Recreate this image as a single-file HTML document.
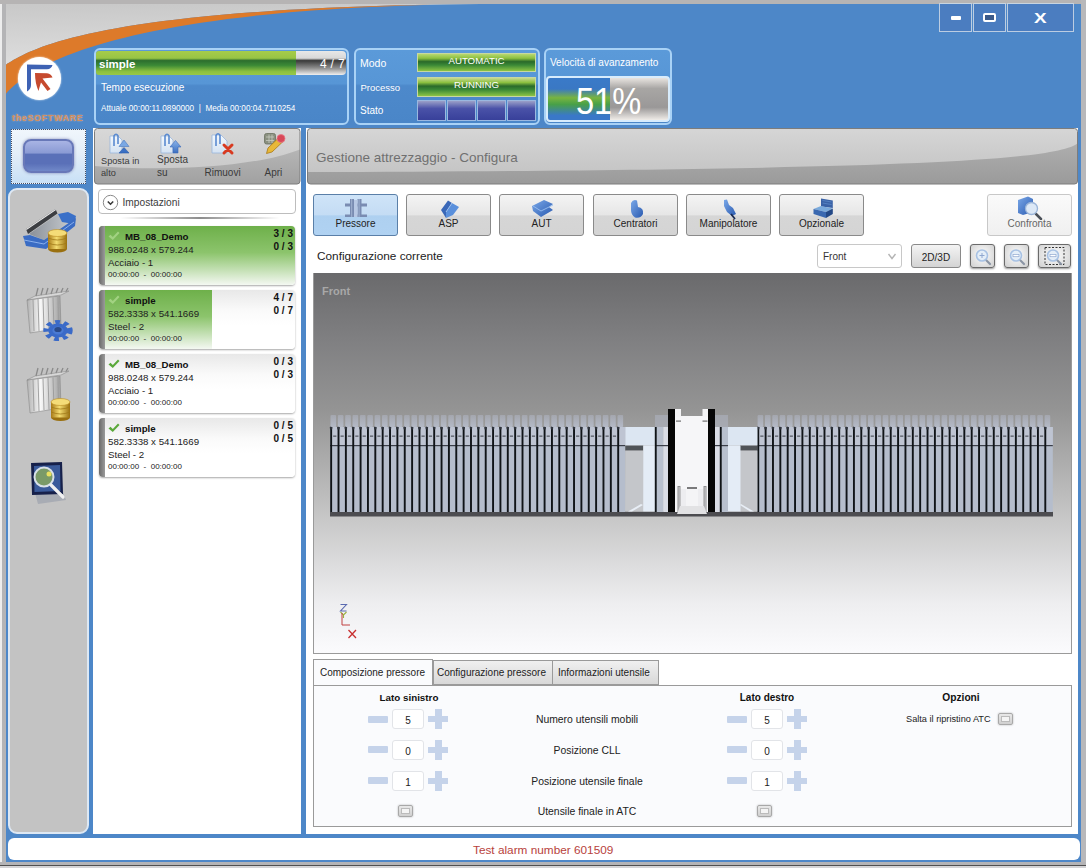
<!DOCTYPE html>
<html><head><meta charset="utf-8">
<style>
*{box-sizing:border-box}
body{margin:0;width:1086px;height:868px;overflow:hidden;position:relative;background:#b9b9bb;font-family:"Liberation Sans",sans-serif}
.a{position:absolute}
.t{position:absolute;white-space:nowrap;line-height:1}
.hp{position:absolute;border:2px solid #a9d2f6;border-radius:6px;background:linear-gradient(#5b9ad9 0%,#5796d6 46%,#4d89cb 49%,#4a86c8 100%)}
.wb{position:absolute;top:3px;height:29px;border:1.5px solid #bccde2;border-top:1px solid #c8d4e0;background:#4b7dc0}
.tb{position:absolute;top:194px;height:42px;width:85px;border:1px solid #8a8a8a;border-radius:3px;background:linear-gradient(#f4f4f4 0%,#e6e6e6 50%,#d6d6d6 52%,#d4d4d4 100%);font-size:10px;color:#222;text-align:center}
.tb span{position:absolute;left:0;right:0;top:23px}
.item{position:absolute;left:99px;width:196px;height:59px;border-radius:4px;background:linear-gradient(#e8e8e8,#fafafa 35%,#fff 60%);box-shadow:0 1px 2px rgba(0,0,0,.35);overflow:hidden}
.item .strip{position:absolute;left:0;top:0;bottom:0;width:6px;background:linear-gradient(90deg,#6a6a6a,#9a9a9a)}
.item .g{position:absolute;left:0;top:0;bottom:0;background:linear-gradient(#6eb04a 0%,#8cc46c 45%,#f4f8f2 100%)}

.mn{position:absolute;width:20px;height:7px;background:#c5d3ea;border-radius:1px}
.pl{position:absolute;width:20px;height:20px}
.pl:before{content:"";position:absolute;left:0;top:7px;width:20px;height:6px;background:#c5d3ea}
.pl:after{content:"";position:absolute;left:6.5px;top:0;width:7px;height:20px;background:#c5d3ea}
.inp{position:absolute;width:32px;height:20px;border:1px solid #e2e4e8;border-radius:3px;background:#fff;font-size:10px;color:#222;text-align:center;line-height:22px}
.cb{position:absolute;width:15px;height:12px;border:1px solid #a8a8a8;border-radius:2px;background:linear-gradient(#e8e8e8,#d0d0d0);box-shadow:0 0 2px rgba(0,0,0,.3)}
.cb:after{content:"";position:absolute;left:2px;top:2px;right:2px;bottom:2px;background:#f4f4f4;border:1px solid #bbb}
.lbl{position:absolute;white-space:nowrap;line-height:1;font-size:10.4px;color:#222;text-align:center;width:200px}
</style></head><body>
<!-- frame -->
<div class="a" style="left:0;top:0;width:2px;height:868px;background:#ededed"></div>
<div class="a" style="left:2px;top:0;width:4px;height:868px;background:#b4b4b6"></div>
<div class="a" style="left:0;top:0;width:1086px;height:4px;background:#b6b4b4"></div>
<div class="a" style="left:1081px;top:0;width:5px;height:868px;background:#b8b8ba"></div>
<div class="a" style="left:0;top:862px;width:1086px;height:6px;background:#b4b4b6"></div>
<div class="a" style="left:0;top:865px;width:1086px;height:1px;background:#505050"></div>
<div class="a" style="left:0;top:866px;width:1086px;height:2px;background:#d4d4d6"></div>
<!-- window bg -->
<div class="a" style="left:6px;top:4px;width:1075px;height:858px;background:#4d87c8"></div>
<svg class="a" style="left:6px;top:4px" width="600" height="100" viewBox="6 4 600 100">
  <defs><linearGradient id="gg" x1="0" y1="0" x2="0.15" y2="1"><stop offset="0" stop-color="#c8c8c8"/><stop offset="1" stop-color="#dedede"/></linearGradient></defs>
  <path d="M6,4 L480,4 C92.3,7.2 28.9,50.4 6,64.7 Z" fill="url(#gg)"/>
  <path d="M6,64.7 C28.9,50.4 92.3,7.2 480,4 C158,7.1 39.9,53.9 6,93.7 Z" fill="#dd7a2a"/>
</svg>
<!-- logo -->
<div class="a" style="left:18px;top:57px;width:43px;height:43px;border-radius:50%;background:#fff;box-shadow:0 0 2px #fff"></div>
<svg class="a" style="left:18px;top:57px" width="43" height="43" viewBox="0 0 43 43">
  <path d="M9,7.5 L34.5,8 Q33.5,12 29,12.3 L13,12.3 L13,28 Q13,32 9,34.5 Z" fill="#3e62b4"/>
  <path d="M17,16 L29,16.3 Q33.5,17 34.5,20.5 L24.5,21.5 L32.5,32 L29.5,34 L23,25.5 Q21.5,30 20.5,34 Q17,26 17,16 Z" fill="#c64a2e"/>
</svg>
<div class="t" style="left:12px;top:114px;font-size:8.8px;font-weight:bold;color:#cf8d60;letter-spacing:0.75px;text-shadow:0 0 1.5px #f0c8a8">theSOFTWARE</div>

<!-- window buttons -->
<div class="wb" style="left:939px;width:33px"></div>
<div class="wb" style="left:973px;width:33px"></div>
<div class="wb" style="left:1007px;width:67px"></div>
<div class="a" style="left:951px;top:16px;width:10px;height:4px;background:#fff;border-radius:1px"></div>
<div class="a" style="left:983px;top:13px;width:13px;height:9px;border:2.5px solid #fff;border-radius:2px;background:#3b5a8a"></div>
<div class="t" style="left:1033.5px;top:11px;font-size:14px;font-weight:bold;color:#fff;transform:scaleX(1.35);transform-origin:0 0">X</div>

<!-- header panel 1 -->
<div class="hp" style="left:94px;top:48px;width:255px;height:77px"></div>
<div class="a" style="left:96px;top:51px;width:200px;height:24px;background:linear-gradient(#a6cc4a 0%,#98c444 30%,#2c6e2e 40%,#3c8a36 60%,#8cc040 85%,#98c848 100%);border-radius:3px 0 0 3px"></div>
<div class="a" style="left:296px;top:51px;width:50px;height:24px;background:linear-gradient(#e8e8e8 0%,#d8d8d8 30%,#3a3a3a 40%,#8a8a8a 70%,#f0f0f0 100%);border-radius:0 4px 4px 0"></div>
<div class="t" style="left:99px;top:59px;font-size:11.5px;font-weight:bold;color:#fff">simple</div>
<div class="t" style="left:320px;top:57.5px;font-size:12px;color:#fff;letter-spacing:0.3px">4 / 7</div>
<div class="t" style="left:101px;top:83px;font-size:10px;color:#fff">Tempo esecuzione</div>
<div class="t" style="left:101px;top:105px;font-size:8.2px;color:#fff">Attuale 00:00:11.0890000 &nbsp;|&nbsp; Media 00:00:04.7110254</div>

<!-- header panel 2 -->
<div class="hp" style="left:354px;top:48px;width:186px;height:77px"></div>
<div class="t" style="left:360px;top:57.8px;font-size:10.5px;color:#fff">Modo</div>
<div class="t" style="left:360.5px;top:82.5px;font-size:9.5px;color:#fff">Processo</div>
<div class="t" style="left:360px;top:105.8px;font-size:10px;color:#fff">Stato</div>
<div class="a" style="left:417px;top:53px;width:119px;height:19px;border:1px solid #c8d8a0;background:linear-gradient(#b8d870 0%,#8cc040 25%,#2a6a2a 45%,#3a8836 65%,#8cc444 100%)"></div>
<div class="t" style="left:417px;top:56.3px;width:119px;text-align:center;font-size:9.7px;color:#fff">AUTOMATIC</div>
<div class="a" style="left:417px;top:77px;width:119px;height:20px;border:1px solid #c8d8a0;background:linear-gradient(#c8d890 0%,#8cc040 25%,#2a6a2a 45%,#3a8836 65%,#8cc444 100%)"></div>
<div class="t" style="left:417px;top:80px;width:119px;text-align:center;font-size:9.7px;color:#fff">RUNNING</div>
<div class="a" style="left:417px;top:100px;width:29px;height:21px;border:1px solid #9ab8e0;background:linear-gradient(#9aa0c8 0%,#4a52a8 40%,#38409a 100%)"></div>
<div class="a" style="left:447px;top:100px;width:29px;height:21px;border:1px solid #9ab8e0;background:linear-gradient(#9aa0c8 0%,#4a52a8 40%,#38409a 100%)"></div>
<div class="a" style="left:477px;top:100px;width:29px;height:21px;border:1px solid #9ab8e0;background:linear-gradient(#9aa0c8 0%,#4a52a8 40%,#38409a 100%)"></div>
<div class="a" style="left:507px;top:100px;width:29px;height:21px;border:1px solid #9ab8e0;background:linear-gradient(#9aa0c8 0%,#4a52a8 40%,#38409a 100%)"></div>

<!-- header panel 3 -->
<div class="hp" style="left:544px;top:48px;width:128px;height:77px"></div>
<div class="t" style="left:550px;top:58.3px;font-size:10px;color:#fff">Velocità di avanzamento</div>
<div class="a" style="left:546px;top:76px;width:124px;height:46px;border:2px solid #d8ecfc;border-radius:4px;background:linear-gradient(#e8e4e0 0%,#a8a6a4 25%,#9a9898 70%,#f0ece8 100%);overflow:hidden">
  <div class="a" style="left:0;top:0;width:62px;height:44px;background:linear-gradient(#3a7ac8 0%,#3a78c4 25%,#78b440 45%,#48a048 60%,#3a78c8 85%,#3a78c8 100%)"></div>
</div>
<div class="t" style="left:576px;top:83.6px;font-size:36px;color:#fff;transform:scaleX(0.905);transform-origin:0 0">51%</div>

<!-- left sidebar -->
<div class="a" style="left:11px;top:129px;width:75px;height:55px;background:#fff"></div><div class="a" style="left:11px;top:129px;width:75px;height:55px;border:1px dotted #4a4e60;background:linear-gradient(#f0f6fc 0%,#e4eef8 45%,#c8e0f6 100%)"></div>
<div class="a" style="left:23px;top:139px;width:51px;height:34px;border-radius:8px;border:2px solid #6878b8;background:linear-gradient(#a8b4e4 0%,#8a9ad4 40%,#5a70b8 44%,#5a70b8 75%,#7088c8 100%);box-shadow:0 0 3px rgba(40,40,120,.5)"></div>
<div class="a" style="left:8px;top:188px;width:81px;height:646px;border-radius:9px;border:2px solid #dde8f4;background:#c3c3c3"></div>

<!-- middle panel -->
<div class="a" style="left:93px;top:128px;width:208px;height:706px;background:#fff"></div>
<svg class="a" style="left:94px;top:128px" width="207" height="57" viewBox="94 128 207 57">
  <defs>
    <linearGradient id="tg1" x1="0" y1="0" x2="0" y2="1"><stop offset="0" stop-color="#d8d8d8"/><stop offset="1" stop-color="#c4c4c4"/></linearGradient>
    <linearGradient id="tg2" x1="0" y1="0" x2="0" y2="1"><stop offset="0" stop-color="#b6b6b6"/><stop offset="1" stop-color="#a0a0a0"/></linearGradient>
    <clipPath id="tc"><rect x="94.5" y="128.5" width="205.5" height="55.5" rx="3"/></clipPath>
  </defs>
  <g clip-path="url(#tc)">
    <rect x="94" y="128" width="207" height="57" fill="url(#tg1)"/>
    <path d="M94,166 C160,171 250,169 301,149 L301,185 L94,185 Z" fill="url(#tg2)"/>
  </g>
  <rect x="94.5" y="128.5" width="205.5" height="55.5" rx="3" fill="none" stroke="#7c7c7c" stroke-width="1"/>
</svg>
<div class="t" style="left:101px;top:155px;font-size:9.2px;color:#3a3a3a;line-height:12.2px">Sposta in<br>alto</div>
<div class="t" style="left:157px;top:154px;font-size:10px;color:#3a3a3a;line-height:12.5px">Sposta<br>su</div>
<div class="t" style="left:204.5px;top:168.2px;font-size:10px;color:#3a3a3a">Rimuovi</div>
<div class="t" style="left:264.5px;top:168.2px;font-size:10px;color:#3a3a3a">Apri</div>

<div class="a" style="left:98px;top:189px;width:198px;height:25px;border:1px solid #bdbdbd;border-radius:4px;background:#fff"></div>
<svg class="a" style="left:102px;top:194px" width="17" height="17" viewBox="0 0 17 17"><circle cx="8.5" cy="8.5" r="7.2" fill="#fff" stroke="#8a8a8a" stroke-width="1"/><path d="M5.8,7.5 L8.5,10.2 L11.2,7.5" fill="none" stroke="#3a3a3a" stroke-width="1.6"/></svg>
<div class="t" style="left:122.5px;top:197.5px;font-size:10.2px;color:#3c3c3c">Impostazioni</div>
<div class="a" style="left:120px;top:217px;width:160px;height:2px;background:linear-gradient(90deg,rgba(0,0,0,0),rgba(0,0,0,.45),rgba(0,0,0,0))"></div>


<div class="item" style="top:226px"><div class="g" style="width:196px"></div><div class="strip"></div></div>
<div class="item" style="top:290px"><div class="g" style="width:113px"></div><div class="strip"></div></div>
<div class="item" style="top:354px"><div class="strip"></div></div>
<div class="item" style="top:418px"><div class="strip"></div></div>
<svg class="a" style="left:108px;top:231px" width="12" height="10" viewBox="0 0 12 10"><path d="M0.5,5.5 L2.5,3.8 L4.8,6 L10,0.5 L11.5,2 L4.8,9 Z" fill="#a2d282"/></svg>
<div class="t" style="left:125px;top:232px;font-size:9.7px;font-weight:bold;color:#111">MB_08_Demo</div>
<div class="t" style="left:108px;top:245px;font-size:9.7px;color:#222">988.0248 x 579.244</div>
<div class="t" style="left:108px;top:258px;font-size:9.7px;color:#222">Acciaio - 1</div>
<div class="t" style="left:108px;top:271px;font-size:8px;color:#222">00:00:00 &nbsp;- &nbsp;00:00:00</div>
<div class="t" style="left:243px;top:229px;width:50px;text-align:right;font-size:10px;font-weight:bold;color:#111">3 / 3</div>
<div class="t" style="left:243px;top:242px;width:50px;text-align:right;font-size:10px;font-weight:bold;color:#111">0 / 3</div>
<svg class="a" style="left:108px;top:295px" width="12" height="10" viewBox="0 0 12 10"><path d="M0.5,5.5 L2.5,3.8 L4.8,6 L10,0.5 L11.5,2 L4.8,9 Z" fill="#a2d282"/></svg>
<div class="t" style="left:125px;top:296px;font-size:9.7px;font-weight:bold;color:#111">simple</div>
<div class="t" style="left:108px;top:309px;font-size:9.7px;color:#222">582.3338 x 541.1669</div>
<div class="t" style="left:108px;top:322px;font-size:9.7px;color:#222">Steel - 2</div>
<div class="t" style="left:108px;top:335px;font-size:8px;color:#222">00:00:00 &nbsp;- &nbsp;00:00:00</div>
<div class="t" style="left:243px;top:293px;width:50px;text-align:right;font-size:10px;font-weight:bold;color:#111">4 / 7</div>
<div class="t" style="left:243px;top:306px;width:50px;text-align:right;font-size:10px;font-weight:bold;color:#111">0 / 7</div>
<svg class="a" style="left:108px;top:359px" width="12" height="10" viewBox="0 0 12 10"><path d="M0.5,5.5 L2.5,3.8 L4.8,6 L10,0.5 L11.5,2 L4.8,9 Z" fill="#5aa83a"/></svg>
<div class="t" style="left:125px;top:360px;font-size:9.7px;font-weight:bold;color:#111">MB_08_Demo</div>
<div class="t" style="left:108px;top:373px;font-size:9.7px;color:#222">988.0248 x 579.244</div>
<div class="t" style="left:108px;top:386px;font-size:9.7px;color:#222">Acciaio - 1</div>
<div class="t" style="left:108px;top:399px;font-size:8px;color:#222">00:00:00 &nbsp;- &nbsp;00:00:00</div>
<div class="t" style="left:243px;top:357px;width:50px;text-align:right;font-size:10px;font-weight:bold;color:#111">0 / 3</div>
<div class="t" style="left:243px;top:370px;width:50px;text-align:right;font-size:10px;font-weight:bold;color:#111">0 / 3</div>
<svg class="a" style="left:108px;top:423px" width="12" height="10" viewBox="0 0 12 10"><path d="M0.5,5.5 L2.5,3.8 L4.8,6 L10,0.5 L11.5,2 L4.8,9 Z" fill="#5aa83a"/></svg>
<div class="t" style="left:125px;top:424px;font-size:9.7px;font-weight:bold;color:#111">simple</div>
<div class="t" style="left:108px;top:437px;font-size:9.7px;color:#222">582.3338 x 541.1669</div>
<div class="t" style="left:108px;top:450px;font-size:9.7px;color:#222">Steel - 2</div>
<div class="t" style="left:108px;top:463px;font-size:8px;color:#222">00:00:00 &nbsp;- &nbsp;00:00:00</div>
<div class="t" style="left:243px;top:421px;width:50px;text-align:right;font-size:10px;font-weight:bold;color:#111">0 / 5</div>
<div class="t" style="left:243px;top:434px;width:50px;text-align:right;font-size:10px;font-weight:bold;color:#111">0 / 5</div>

<!-- main panel -->
<div class="a" style="left:306px;top:128px;width:772px;height:706px;background:#fff"></div>
<svg class="a" style="left:307px;top:128px" width="771" height="57" viewBox="307 128 771 57">
  <defs>
    <linearGradient id="hg1" x1="0" y1="0" x2="0" y2="1"><stop offset="0" stop-color="#d6d6d6"/><stop offset="1" stop-color="#c0c0c0"/></linearGradient>
    <linearGradient id="hg2" x1="0" y1="0" x2="0" y2="1"><stop offset="0" stop-color="#aeaeae"/><stop offset="1" stop-color="#9a9a9a"/></linearGradient>
    <clipPath id="hc"><rect x="307.5" y="128.5" width="770" height="55.5" rx="3"/></clipPath>
  </defs>
  <g clip-path="url(#hc)">
    <rect x="307" y="128" width="771" height="57" fill="url(#hg1)"/>
    <path d="M307,172 C850,170 1055,163 1078,143 L1078,185 L307,185 Z" fill="url(#hg2)"/>
  </g>
  <rect x="307.5" y="128.5" width="770" height="55.5" rx="3" fill="none" stroke="#7c7c7c" stroke-width="1"/>
</svg>
<div class="t" style="left:316px;top:151px;font-size:13.5px;color:#707070">Gestione attrezzaggio - Configura</div>


<!-- toolbar buttons -->
<div class="tb" style="left:313px;border-color:#5a7fa8;background:linear-gradient(#cfe4f8 0%,#c4dcf4 50%,#aed0f0 52%,#b0d2f2 100%)"><span>Pressore</span></div>
<div class="tb" style="left:406px"><span>ASP</span></div>
<div class="tb" style="left:499px"><span>AUT</span></div>
<div class="tb" style="left:593px"><span>Centratori</span></div>
<div class="tb" style="left:686px"><span>Manipolatore</span></div>
<div class="tb" style="left:779px"><span>Opzionale</span></div>
<div class="tb" style="left:987px;border-color:#c8c8c8;background:linear-gradient(#fafafa,#f0f0f0);color:#666"><span>Confronta</span></div>

<div class="t" style="left:317px;top:251px;font-size:11.8px;color:#222">Configurazione corrente</div>
<div class="a" style="left:817px;top:244px;width:85px;height:24px;border:1px solid #c8c8c8;border-radius:3px;background:#fff"></div>
<div class="t" style="left:823px;top:252px;font-size:10px;color:#333">Front</div>
<svg class="a" style="left:887px;top:251.5px" width="10" height="9" viewBox="0 0 10 9"><path d="M1.5,2 L5,6.5 L8.5,2" fill="none" stroke="#b4b4b4" stroke-width="1.4"/></svg>
<div class="a" style="left:911px;top:244px;width:50px;height:24px;border:1px solid #8a8a8a;border-radius:3px;background:linear-gradient(#f4f4f4 0%,#e4e4e4 50%,#d4d4d4 100%)"></div>
<div class="t" style="left:911px;top:252.5px;width:50px;text-align:center;font-size:10px;color:#222">2D/3D</div>
<div class="a" style="left:970px;top:244px;width:25px;height:24px;border:1px solid #6a6a6a;border-radius:3px;background:radial-gradient(ellipse at 50% 45%,#f0f0f0 30%,#cfcfcf 100%);box-shadow:0 1px 2px rgba(0,0,0,.4)"></div>
<div class="a" style="left:1004px;top:244px;width:25px;height:24px;border:1px solid #6a6a6a;border-radius:3px;background:radial-gradient(ellipse at 50% 45%,#f0f0f0 30%,#cfcfcf 100%);box-shadow:0 1px 2px rgba(0,0,0,.4)"></div>
<div class="a" style="left:1038px;top:244px;width:33px;height:24px;border:1px solid #6a6a6a;border-radius:3px;background:radial-gradient(ellipse at 50% 45%,#f0f0f0 30%,#cfcfcf 100%);box-shadow:0 1px 2px rgba(0,0,0,.4)"></div>

<!-- viewport -->
<div class="a" style="left:313px;top:273px;width:759px;height:381px;border:1px solid #9a9a9a;border-top:none;background:linear-gradient(#6a6a6c 0%,#808082 18%,#949494 36%,#c8c8c8 65%,#eeeef0 87%,#fbfbfd 100%)"></div>
<div class="t" style="left:322px;top:286px;font-size:11px;font-weight:bold;color:#a8a8a8">Front</div>
<svg id="scene" class="a" style="left:313px;top:273px" width="759" height="380" viewBox="313 273 759 380">
<defs><linearGradient id="spk" x1="0" y1="0" x2="0" y2="1"><stop offset="0" stop-color="#b4bacb" stop-opacity="0.45"/><stop offset="1" stop-color="#b8becd" stop-opacity="0.85"/></linearGradient></defs>
<rect x="330" y="511.5" width="723" height="5" fill="#4c4c50"/>
<rect x="330" y="427" width="295.29999999999995" height="85" fill="#b5bdcc"/>
<rect x="330" y="427" width="295.29999999999995" height="18" fill="#bec4d2"/>
<rect x="330" y="445" width="295.29999999999995" height="1.2" fill="#3a3e48"/>
<rect x="330.20" y="427" width="1.9" height="85" fill="#101418"/>
<path d="M329.70,427.5 L331.10,426 L332.50,427.5 L332.00,429.5 L330.20,429.5 Z" fill="#30343c"/>
<rect x="337.56" y="427" width="1.9" height="85" fill="#101418"/>
<path d="M337.06,427.5 L338.46,426 L339.86,427.5 L339.36,429.5 L337.56,429.5 Z" fill="#30343c"/>
<rect x="344.92" y="427" width="1.9" height="85" fill="#101418"/>
<path d="M344.42,427.5 L345.82,426 L347.22,427.5 L346.72,429.5 L344.92,429.5 Z" fill="#30343c"/>
<rect x="352.28" y="427" width="1.9" height="85" fill="#101418"/>
<path d="M351.78,427.5 L353.18,426 L354.58,427.5 L354.08,429.5 L352.28,429.5 Z" fill="#30343c"/>
<rect x="359.64" y="427" width="1.9" height="85" fill="#101418"/>
<path d="M359.14,427.5 L360.54,426 L361.94,427.5 L361.44,429.5 L359.64,429.5 Z" fill="#30343c"/>
<rect x="367.00" y="427" width="1.9" height="85" fill="#101418"/>
<path d="M366.50,427.5 L367.90,426 L369.30,427.5 L368.80,429.5 L367.00,429.5 Z" fill="#30343c"/>
<rect x="374.36" y="427" width="1.9" height="85" fill="#101418"/>
<path d="M373.86,427.5 L375.26,426 L376.66,427.5 L376.16,429.5 L374.36,429.5 Z" fill="#30343c"/>
<rect x="381.72" y="427" width="1.9" height="85" fill="#101418"/>
<path d="M381.22,427.5 L382.62,426 L384.02,427.5 L383.52,429.5 L381.72,429.5 Z" fill="#30343c"/>
<rect x="389.08" y="427" width="1.9" height="85" fill="#101418"/>
<path d="M388.58,427.5 L389.98,426 L391.38,427.5 L390.88,429.5 L389.08,429.5 Z" fill="#30343c"/>
<rect x="396.44" y="427" width="1.9" height="85" fill="#101418"/>
<path d="M395.94,427.5 L397.34,426 L398.74,427.5 L398.24,429.5 L396.44,429.5 Z" fill="#30343c"/>
<rect x="403.80" y="427" width="1.9" height="85" fill="#101418"/>
<path d="M403.30,427.5 L404.70,426 L406.10,427.5 L405.60,429.5 L403.80,429.5 Z" fill="#30343c"/>
<rect x="411.16" y="427" width="1.9" height="85" fill="#101418"/>
<path d="M410.66,427.5 L412.06,426 L413.46,427.5 L412.96,429.5 L411.16,429.5 Z" fill="#30343c"/>
<rect x="418.52" y="427" width="1.9" height="85" fill="#101418"/>
<path d="M418.02,427.5 L419.42,426 L420.82,427.5 L420.32,429.5 L418.52,429.5 Z" fill="#30343c"/>
<rect x="425.88" y="427" width="1.9" height="85" fill="#101418"/>
<path d="M425.38,427.5 L426.78,426 L428.18,427.5 L427.68,429.5 L425.88,429.5 Z" fill="#30343c"/>
<rect x="433.24" y="427" width="1.9" height="85" fill="#101418"/>
<path d="M432.74,427.5 L434.14,426 L435.54,427.5 L435.04,429.5 L433.24,429.5 Z" fill="#30343c"/>
<rect x="440.60" y="427" width="1.9" height="85" fill="#101418"/>
<path d="M440.10,427.5 L441.50,426 L442.90,427.5 L442.40,429.5 L440.60,429.5 Z" fill="#30343c"/>
<rect x="447.96" y="427" width="1.9" height="85" fill="#101418"/>
<path d="M447.46,427.5 L448.86,426 L450.26,427.5 L449.76,429.5 L447.96,429.5 Z" fill="#30343c"/>
<rect x="455.32" y="427" width="1.9" height="85" fill="#101418"/>
<path d="M454.82,427.5 L456.22,426 L457.62,427.5 L457.12,429.5 L455.32,429.5 Z" fill="#30343c"/>
<rect x="462.68" y="427" width="1.9" height="85" fill="#101418"/>
<path d="M462.18,427.5 L463.58,426 L464.98,427.5 L464.48,429.5 L462.68,429.5 Z" fill="#30343c"/>
<rect x="470.04" y="427" width="1.9" height="85" fill="#101418"/>
<path d="M469.54,427.5 L470.94,426 L472.34,427.5 L471.84,429.5 L470.04,429.5 Z" fill="#30343c"/>
<rect x="477.40" y="427" width="1.9" height="85" fill="#101418"/>
<path d="M476.90,427.5 L478.30,426 L479.70,427.5 L479.20,429.5 L477.40,429.5 Z" fill="#30343c"/>
<rect x="484.76" y="427" width="1.9" height="85" fill="#101418"/>
<path d="M484.26,427.5 L485.66,426 L487.06,427.5 L486.56,429.5 L484.76,429.5 Z" fill="#30343c"/>
<rect x="492.12" y="427" width="1.9" height="85" fill="#101418"/>
<path d="M491.62,427.5 L493.02,426 L494.42,427.5 L493.92,429.5 L492.12,429.5 Z" fill="#30343c"/>
<rect x="499.48" y="427" width="1.9" height="85" fill="#101418"/>
<path d="M498.98,427.5 L500.38,426 L501.78,427.5 L501.28,429.5 L499.48,429.5 Z" fill="#30343c"/>
<rect x="506.84" y="427" width="1.9" height="85" fill="#101418"/>
<path d="M506.34,427.5 L507.74,426 L509.14,427.5 L508.64,429.5 L506.84,429.5 Z" fill="#30343c"/>
<rect x="514.20" y="427" width="1.9" height="85" fill="#101418"/>
<path d="M513.70,427.5 L515.10,426 L516.50,427.5 L516.00,429.5 L514.20,429.5 Z" fill="#30343c"/>
<rect x="521.56" y="427" width="1.9" height="85" fill="#101418"/>
<path d="M521.06,427.5 L522.46,426 L523.86,427.5 L523.36,429.5 L521.56,429.5 Z" fill="#30343c"/>
<rect x="528.92" y="427" width="1.9" height="85" fill="#101418"/>
<path d="M528.42,427.5 L529.82,426 L531.22,427.5 L530.72,429.5 L528.92,429.5 Z" fill="#30343c"/>
<rect x="536.28" y="427" width="1.9" height="85" fill="#101418"/>
<path d="M535.78,427.5 L537.18,426 L538.58,427.5 L538.08,429.5 L536.28,429.5 Z" fill="#30343c"/>
<rect x="543.64" y="427" width="1.9" height="85" fill="#101418"/>
<path d="M543.14,427.5 L544.54,426 L545.94,427.5 L545.44,429.5 L543.64,429.5 Z" fill="#30343c"/>
<rect x="551.00" y="427" width="1.9" height="85" fill="#101418"/>
<path d="M550.50,427.5 L551.90,426 L553.30,427.5 L552.80,429.5 L551.00,429.5 Z" fill="#30343c"/>
<rect x="558.36" y="427" width="1.9" height="85" fill="#101418"/>
<path d="M557.86,427.5 L559.26,426 L560.66,427.5 L560.16,429.5 L558.36,429.5 Z" fill="#30343c"/>
<rect x="565.72" y="427" width="1.9" height="85" fill="#101418"/>
<path d="M565.22,427.5 L566.62,426 L568.02,427.5 L567.52,429.5 L565.72,429.5 Z" fill="#30343c"/>
<rect x="573.08" y="427" width="1.9" height="85" fill="#101418"/>
<path d="M572.58,427.5 L573.98,426 L575.38,427.5 L574.88,429.5 L573.08,429.5 Z" fill="#30343c"/>
<rect x="580.44" y="427" width="1.9" height="85" fill="#101418"/>
<path d="M579.94,427.5 L581.34,426 L582.74,427.5 L582.24,429.5 L580.44,429.5 Z" fill="#30343c"/>
<rect x="587.80" y="427" width="1.9" height="85" fill="#101418"/>
<path d="M587.30,427.5 L588.70,426 L590.10,427.5 L589.60,429.5 L587.80,429.5 Z" fill="#30343c"/>
<rect x="595.16" y="427" width="1.9" height="85" fill="#101418"/>
<path d="M594.66,427.5 L596.06,426 L597.46,427.5 L596.96,429.5 L595.16,429.5 Z" fill="#30343c"/>
<rect x="602.52" y="427" width="1.9" height="85" fill="#101418"/>
<path d="M602.02,427.5 L603.42,426 L604.82,427.5 L604.32,429.5 L602.52,429.5 Z" fill="#30343c"/>
<rect x="609.88" y="427" width="1.9" height="85" fill="#101418"/>
<path d="M609.38,427.5 L610.78,426 L612.18,427.5 L611.68,429.5 L609.88,429.5 Z" fill="#30343c"/>
<rect x="617.24" y="427" width="1.9" height="85" fill="#101418"/>
<path d="M616.74,427.5 L618.14,426 L619.54,427.5 L619.04,429.5 L617.24,429.5 Z" fill="#30343c"/>
<rect x="333.18" y="435.5" width="3.2" height="1.3" fill="#5a5e68"/>
<rect x="340.54" y="435.5" width="3.2" height="1.3" fill="#5a5e68"/>
<rect x="347.90" y="435.5" width="3.2" height="1.3" fill="#5a5e68"/>
<rect x="355.26" y="435.5" width="3.2" height="1.3" fill="#5a5e68"/>
<rect x="362.62" y="435.5" width="3.2" height="1.3" fill="#5a5e68"/>
<rect x="369.98" y="435.5" width="3.2" height="1.3" fill="#5a5e68"/>
<rect x="377.34" y="435.5" width="3.2" height="1.3" fill="#5a5e68"/>
<rect x="384.70" y="435.5" width="3.2" height="1.3" fill="#5a5e68"/>
<rect x="392.06" y="435.5" width="3.2" height="1.3" fill="#5a5e68"/>
<rect x="399.42" y="435.5" width="3.2" height="1.3" fill="#5a5e68"/>
<rect x="406.78" y="435.5" width="3.2" height="1.3" fill="#5a5e68"/>
<rect x="414.14" y="435.5" width="3.2" height="1.3" fill="#5a5e68"/>
<rect x="421.50" y="435.5" width="3.2" height="1.3" fill="#5a5e68"/>
<rect x="428.86" y="435.5" width="3.2" height="1.3" fill="#5a5e68"/>
<rect x="436.22" y="435.5" width="3.2" height="1.3" fill="#5a5e68"/>
<rect x="443.58" y="435.5" width="3.2" height="1.3" fill="#5a5e68"/>
<rect x="450.94" y="435.5" width="3.2" height="1.3" fill="#5a5e68"/>
<rect x="458.30" y="435.5" width="3.2" height="1.3" fill="#5a5e68"/>
<rect x="465.66" y="435.5" width="3.2" height="1.3" fill="#5a5e68"/>
<rect x="473.02" y="435.5" width="3.2" height="1.3" fill="#5a5e68"/>
<rect x="480.38" y="435.5" width="3.2" height="1.3" fill="#5a5e68"/>
<rect x="487.74" y="435.5" width="3.2" height="1.3" fill="#5a5e68"/>
<rect x="495.10" y="435.5" width="3.2" height="1.3" fill="#5a5e68"/>
<rect x="502.46" y="435.5" width="3.2" height="1.3" fill="#5a5e68"/>
<rect x="509.82" y="435.5" width="3.2" height="1.3" fill="#5a5e68"/>
<rect x="517.18" y="435.5" width="3.2" height="1.3" fill="#5a5e68"/>
<rect x="524.54" y="435.5" width="3.2" height="1.3" fill="#5a5e68"/>
<rect x="531.90" y="435.5" width="3.2" height="1.3" fill="#5a5e68"/>
<rect x="539.26" y="435.5" width="3.2" height="1.3" fill="#5a5e68"/>
<rect x="546.62" y="435.5" width="3.2" height="1.3" fill="#5a5e68"/>
<rect x="553.98" y="435.5" width="3.2" height="1.3" fill="#5a5e68"/>
<rect x="561.34" y="435.5" width="3.2" height="1.3" fill="#5a5e68"/>
<rect x="568.70" y="435.5" width="3.2" height="1.3" fill="#5a5e68"/>
<rect x="576.06" y="435.5" width="3.2" height="1.3" fill="#5a5e68"/>
<rect x="583.42" y="435.5" width="3.2" height="1.3" fill="#5a5e68"/>
<rect x="590.78" y="435.5" width="3.2" height="1.3" fill="#5a5e68"/>
<rect x="598.14" y="435.5" width="3.2" height="1.3" fill="#5a5e68"/>
<rect x="605.50" y="435.5" width="3.2" height="1.3" fill="#5a5e68"/>
<rect x="612.86" y="435.5" width="3.2" height="1.3" fill="#5a5e68"/>
<rect x="330.50" y="415" width="5.6" height="12" rx="1" fill="url(#spk)"/>
<rect x="337.86" y="415" width="5.6" height="12" rx="1" fill="url(#spk)"/>
<rect x="345.22" y="415" width="5.6" height="12" rx="1" fill="url(#spk)"/>
<rect x="352.58" y="415" width="5.6" height="12" rx="1" fill="url(#spk)"/>
<rect x="359.94" y="415" width="5.6" height="12" rx="1" fill="url(#spk)"/>
<rect x="367.30" y="415" width="5.6" height="12" rx="1" fill="url(#spk)"/>
<rect x="374.66" y="415" width="5.6" height="12" rx="1" fill="url(#spk)"/>
<rect x="382.02" y="415" width="5.6" height="12" rx="1" fill="url(#spk)"/>
<rect x="389.38" y="415" width="5.6" height="12" rx="1" fill="url(#spk)"/>
<rect x="396.74" y="415" width="5.6" height="12" rx="1" fill="url(#spk)"/>
<rect x="404.10" y="415" width="5.6" height="12" rx="1" fill="url(#spk)"/>
<rect x="411.46" y="415" width="5.6" height="12" rx="1" fill="url(#spk)"/>
<rect x="418.82" y="415" width="5.6" height="12" rx="1" fill="url(#spk)"/>
<rect x="426.18" y="415" width="5.6" height="12" rx="1" fill="url(#spk)"/>
<rect x="433.54" y="415" width="5.6" height="12" rx="1" fill="url(#spk)"/>
<rect x="440.90" y="415" width="5.6" height="12" rx="1" fill="url(#spk)"/>
<rect x="448.26" y="415" width="5.6" height="12" rx="1" fill="url(#spk)"/>
<rect x="455.62" y="415" width="5.6" height="12" rx="1" fill="url(#spk)"/>
<rect x="462.98" y="415" width="5.6" height="12" rx="1" fill="url(#spk)"/>
<rect x="470.34" y="415" width="5.6" height="12" rx="1" fill="url(#spk)"/>
<rect x="477.70" y="415" width="5.6" height="12" rx="1" fill="url(#spk)"/>
<rect x="485.06" y="415" width="5.6" height="12" rx="1" fill="url(#spk)"/>
<rect x="492.42" y="415" width="5.6" height="12" rx="1" fill="url(#spk)"/>
<rect x="499.78" y="415" width="5.6" height="12" rx="1" fill="url(#spk)"/>
<rect x="507.14" y="415" width="5.6" height="12" rx="1" fill="url(#spk)"/>
<rect x="514.50" y="415" width="5.6" height="12" rx="1" fill="url(#spk)"/>
<rect x="521.86" y="415" width="5.6" height="12" rx="1" fill="url(#spk)"/>
<rect x="529.22" y="415" width="5.6" height="12" rx="1" fill="url(#spk)"/>
<rect x="536.58" y="415" width="5.6" height="12" rx="1" fill="url(#spk)"/>
<rect x="543.94" y="415" width="5.6" height="12" rx="1" fill="url(#spk)"/>
<rect x="551.30" y="415" width="5.6" height="12" rx="1" fill="url(#spk)"/>
<rect x="558.66" y="415" width="5.6" height="12" rx="1" fill="url(#spk)"/>
<rect x="566.02" y="415" width="5.6" height="12" rx="1" fill="url(#spk)"/>
<rect x="573.38" y="415" width="5.6" height="12" rx="1" fill="url(#spk)"/>
<rect x="580.74" y="415" width="5.6" height="12" rx="1" fill="url(#spk)"/>
<rect x="588.10" y="415" width="5.6" height="12" rx="1" fill="url(#spk)"/>
<rect x="595.46" y="415" width="5.6" height="12" rx="1" fill="url(#spk)"/>
<rect x="602.82" y="415" width="5.6" height="12" rx="1" fill="url(#spk)"/>
<rect x="610.18" y="415" width="5.6" height="12" rx="1" fill="url(#spk)"/>
<rect x="617.54" y="415" width="5.6" height="12" rx="1" fill="url(#spk)"/>
<rect x="757.4" y="427" width="295.4" height="85" fill="#b5bdcc"/>
<rect x="757.4" y="427" width="295.4" height="18" fill="#bec4d2"/>
<rect x="757.4" y="445" width="295.4" height="1.2" fill="#3a3e48"/>
<rect x="757.30" y="427" width="1.9" height="85" fill="#101418"/>
<path d="M756.80,427.5 L758.20,426 L759.60,427.5 L759.10,429.5 L757.30,429.5 Z" fill="#30343c"/>
<rect x="764.66" y="427" width="1.9" height="85" fill="#101418"/>
<path d="M764.16,427.5 L765.56,426 L766.96,427.5 L766.46,429.5 L764.66,429.5 Z" fill="#30343c"/>
<rect x="772.02" y="427" width="1.9" height="85" fill="#101418"/>
<path d="M771.52,427.5 L772.92,426 L774.32,427.5 L773.82,429.5 L772.02,429.5 Z" fill="#30343c"/>
<rect x="779.38" y="427" width="1.9" height="85" fill="#101418"/>
<path d="M778.88,427.5 L780.28,426 L781.68,427.5 L781.18,429.5 L779.38,429.5 Z" fill="#30343c"/>
<rect x="786.74" y="427" width="1.9" height="85" fill="#101418"/>
<path d="M786.24,427.5 L787.64,426 L789.04,427.5 L788.54,429.5 L786.74,429.5 Z" fill="#30343c"/>
<rect x="794.10" y="427" width="1.9" height="85" fill="#101418"/>
<path d="M793.60,427.5 L795.00,426 L796.40,427.5 L795.90,429.5 L794.10,429.5 Z" fill="#30343c"/>
<rect x="801.46" y="427" width="1.9" height="85" fill="#101418"/>
<path d="M800.96,427.5 L802.36,426 L803.76,427.5 L803.26,429.5 L801.46,429.5 Z" fill="#30343c"/>
<rect x="808.82" y="427" width="1.9" height="85" fill="#101418"/>
<path d="M808.32,427.5 L809.72,426 L811.12,427.5 L810.62,429.5 L808.82,429.5 Z" fill="#30343c"/>
<rect x="816.18" y="427" width="1.9" height="85" fill="#101418"/>
<path d="M815.68,427.5 L817.08,426 L818.48,427.5 L817.98,429.5 L816.18,429.5 Z" fill="#30343c"/>
<rect x="823.54" y="427" width="1.9" height="85" fill="#101418"/>
<path d="M823.04,427.5 L824.44,426 L825.84,427.5 L825.34,429.5 L823.54,429.5 Z" fill="#30343c"/>
<rect x="830.90" y="427" width="1.9" height="85" fill="#101418"/>
<path d="M830.40,427.5 L831.80,426 L833.20,427.5 L832.70,429.5 L830.90,429.5 Z" fill="#30343c"/>
<rect x="838.26" y="427" width="1.9" height="85" fill="#101418"/>
<path d="M837.76,427.5 L839.16,426 L840.56,427.5 L840.06,429.5 L838.26,429.5 Z" fill="#30343c"/>
<rect x="845.62" y="427" width="1.9" height="85" fill="#101418"/>
<path d="M845.12,427.5 L846.52,426 L847.92,427.5 L847.42,429.5 L845.62,429.5 Z" fill="#30343c"/>
<rect x="852.98" y="427" width="1.9" height="85" fill="#101418"/>
<path d="M852.48,427.5 L853.88,426 L855.28,427.5 L854.78,429.5 L852.98,429.5 Z" fill="#30343c"/>
<rect x="860.34" y="427" width="1.9" height="85" fill="#101418"/>
<path d="M859.84,427.5 L861.24,426 L862.64,427.5 L862.14,429.5 L860.34,429.5 Z" fill="#30343c"/>
<rect x="867.70" y="427" width="1.9" height="85" fill="#101418"/>
<path d="M867.20,427.5 L868.60,426 L870.00,427.5 L869.50,429.5 L867.70,429.5 Z" fill="#30343c"/>
<rect x="875.06" y="427" width="1.9" height="85" fill="#101418"/>
<path d="M874.56,427.5 L875.96,426 L877.36,427.5 L876.86,429.5 L875.06,429.5 Z" fill="#30343c"/>
<rect x="882.42" y="427" width="1.9" height="85" fill="#101418"/>
<path d="M881.92,427.5 L883.32,426 L884.72,427.5 L884.22,429.5 L882.42,429.5 Z" fill="#30343c"/>
<rect x="889.78" y="427" width="1.9" height="85" fill="#101418"/>
<path d="M889.28,427.5 L890.68,426 L892.08,427.5 L891.58,429.5 L889.78,429.5 Z" fill="#30343c"/>
<rect x="897.14" y="427" width="1.9" height="85" fill="#101418"/>
<path d="M896.64,427.5 L898.04,426 L899.44,427.5 L898.94,429.5 L897.14,429.5 Z" fill="#30343c"/>
<rect x="904.50" y="427" width="1.9" height="85" fill="#101418"/>
<path d="M904.00,427.5 L905.40,426 L906.80,427.5 L906.30,429.5 L904.50,429.5 Z" fill="#30343c"/>
<rect x="911.86" y="427" width="1.9" height="85" fill="#101418"/>
<path d="M911.36,427.5 L912.76,426 L914.16,427.5 L913.66,429.5 L911.86,429.5 Z" fill="#30343c"/>
<rect x="919.22" y="427" width="1.9" height="85" fill="#101418"/>
<path d="M918.72,427.5 L920.12,426 L921.52,427.5 L921.02,429.5 L919.22,429.5 Z" fill="#30343c"/>
<rect x="926.58" y="427" width="1.9" height="85" fill="#101418"/>
<path d="M926.08,427.5 L927.48,426 L928.88,427.5 L928.38,429.5 L926.58,429.5 Z" fill="#30343c"/>
<rect x="933.94" y="427" width="1.9" height="85" fill="#101418"/>
<path d="M933.44,427.5 L934.84,426 L936.24,427.5 L935.74,429.5 L933.94,429.5 Z" fill="#30343c"/>
<rect x="941.30" y="427" width="1.9" height="85" fill="#101418"/>
<path d="M940.80,427.5 L942.20,426 L943.60,427.5 L943.10,429.5 L941.30,429.5 Z" fill="#30343c"/>
<rect x="948.66" y="427" width="1.9" height="85" fill="#101418"/>
<path d="M948.16,427.5 L949.56,426 L950.96,427.5 L950.46,429.5 L948.66,429.5 Z" fill="#30343c"/>
<rect x="956.02" y="427" width="1.9" height="85" fill="#101418"/>
<path d="M955.52,427.5 L956.92,426 L958.32,427.5 L957.82,429.5 L956.02,429.5 Z" fill="#30343c"/>
<rect x="963.38" y="427" width="1.9" height="85" fill="#101418"/>
<path d="M962.88,427.5 L964.28,426 L965.68,427.5 L965.18,429.5 L963.38,429.5 Z" fill="#30343c"/>
<rect x="970.74" y="427" width="1.9" height="85" fill="#101418"/>
<path d="M970.24,427.5 L971.64,426 L973.04,427.5 L972.54,429.5 L970.74,429.5 Z" fill="#30343c"/>
<rect x="978.10" y="427" width="1.9" height="85" fill="#101418"/>
<path d="M977.60,427.5 L979.00,426 L980.40,427.5 L979.90,429.5 L978.10,429.5 Z" fill="#30343c"/>
<rect x="985.46" y="427" width="1.9" height="85" fill="#101418"/>
<path d="M984.96,427.5 L986.36,426 L987.76,427.5 L987.26,429.5 L985.46,429.5 Z" fill="#30343c"/>
<rect x="992.82" y="427" width="1.9" height="85" fill="#101418"/>
<path d="M992.32,427.5 L993.72,426 L995.12,427.5 L994.62,429.5 L992.82,429.5 Z" fill="#30343c"/>
<rect x="1000.18" y="427" width="1.9" height="85" fill="#101418"/>
<path d="M999.68,427.5 L1001.08,426 L1002.48,427.5 L1001.98,429.5 L1000.18,429.5 Z" fill="#30343c"/>
<rect x="1007.54" y="427" width="1.9" height="85" fill="#101418"/>
<path d="M1007.04,427.5 L1008.44,426 L1009.84,427.5 L1009.34,429.5 L1007.54,429.5 Z" fill="#30343c"/>
<rect x="1014.90" y="427" width="1.9" height="85" fill="#101418"/>
<path d="M1014.40,427.5 L1015.80,426 L1017.20,427.5 L1016.70,429.5 L1014.90,429.5 Z" fill="#30343c"/>
<rect x="1022.26" y="427" width="1.9" height="85" fill="#101418"/>
<path d="M1021.76,427.5 L1023.16,426 L1024.56,427.5 L1024.06,429.5 L1022.26,429.5 Z" fill="#30343c"/>
<rect x="1029.62" y="427" width="1.9" height="85" fill="#101418"/>
<path d="M1029.12,427.5 L1030.52,426 L1031.92,427.5 L1031.42,429.5 L1029.62,429.5 Z" fill="#30343c"/>
<rect x="1036.98" y="427" width="1.9" height="85" fill="#101418"/>
<path d="M1036.48,427.5 L1037.88,426 L1039.28,427.5 L1038.78,429.5 L1036.98,429.5 Z" fill="#30343c"/>
<rect x="1044.34" y="427" width="1.9" height="85" fill="#101418"/>
<path d="M1043.84,427.5 L1045.24,426 L1046.64,427.5 L1046.14,429.5 L1044.34,429.5 Z" fill="#30343c"/>
<rect x="760.28" y="435.5" width="3.2" height="1.3" fill="#5a5e68"/>
<rect x="767.64" y="435.5" width="3.2" height="1.3" fill="#5a5e68"/>
<rect x="775.00" y="435.5" width="3.2" height="1.3" fill="#5a5e68"/>
<rect x="782.36" y="435.5" width="3.2" height="1.3" fill="#5a5e68"/>
<rect x="789.72" y="435.5" width="3.2" height="1.3" fill="#5a5e68"/>
<rect x="797.08" y="435.5" width="3.2" height="1.3" fill="#5a5e68"/>
<rect x="804.44" y="435.5" width="3.2" height="1.3" fill="#5a5e68"/>
<rect x="811.80" y="435.5" width="3.2" height="1.3" fill="#5a5e68"/>
<rect x="819.16" y="435.5" width="3.2" height="1.3" fill="#5a5e68"/>
<rect x="826.52" y="435.5" width="3.2" height="1.3" fill="#5a5e68"/>
<rect x="833.88" y="435.5" width="3.2" height="1.3" fill="#5a5e68"/>
<rect x="841.24" y="435.5" width="3.2" height="1.3" fill="#5a5e68"/>
<rect x="848.60" y="435.5" width="3.2" height="1.3" fill="#5a5e68"/>
<rect x="855.96" y="435.5" width="3.2" height="1.3" fill="#5a5e68"/>
<rect x="863.32" y="435.5" width="3.2" height="1.3" fill="#5a5e68"/>
<rect x="870.68" y="435.5" width="3.2" height="1.3" fill="#5a5e68"/>
<rect x="878.04" y="435.5" width="3.2" height="1.3" fill="#5a5e68"/>
<rect x="885.40" y="435.5" width="3.2" height="1.3" fill="#5a5e68"/>
<rect x="892.76" y="435.5" width="3.2" height="1.3" fill="#5a5e68"/>
<rect x="900.12" y="435.5" width="3.2" height="1.3" fill="#5a5e68"/>
<rect x="907.48" y="435.5" width="3.2" height="1.3" fill="#5a5e68"/>
<rect x="914.84" y="435.5" width="3.2" height="1.3" fill="#5a5e68"/>
<rect x="922.20" y="435.5" width="3.2" height="1.3" fill="#5a5e68"/>
<rect x="929.56" y="435.5" width="3.2" height="1.3" fill="#5a5e68"/>
<rect x="936.92" y="435.5" width="3.2" height="1.3" fill="#5a5e68"/>
<rect x="944.28" y="435.5" width="3.2" height="1.3" fill="#5a5e68"/>
<rect x="951.64" y="435.5" width="3.2" height="1.3" fill="#5a5e68"/>
<rect x="959.00" y="435.5" width="3.2" height="1.3" fill="#5a5e68"/>
<rect x="966.36" y="435.5" width="3.2" height="1.3" fill="#5a5e68"/>
<rect x="973.72" y="435.5" width="3.2" height="1.3" fill="#5a5e68"/>
<rect x="981.08" y="435.5" width="3.2" height="1.3" fill="#5a5e68"/>
<rect x="988.44" y="435.5" width="3.2" height="1.3" fill="#5a5e68"/>
<rect x="995.80" y="435.5" width="3.2" height="1.3" fill="#5a5e68"/>
<rect x="1003.16" y="435.5" width="3.2" height="1.3" fill="#5a5e68"/>
<rect x="1010.52" y="435.5" width="3.2" height="1.3" fill="#5a5e68"/>
<rect x="1017.88" y="435.5" width="3.2" height="1.3" fill="#5a5e68"/>
<rect x="1025.24" y="435.5" width="3.2" height="1.3" fill="#5a5e68"/>
<rect x="1032.60" y="435.5" width="3.2" height="1.3" fill="#5a5e68"/>
<rect x="1039.96" y="435.5" width="3.2" height="1.3" fill="#5a5e68"/>
<rect x="757.60" y="415" width="5.6" height="12" rx="1" fill="url(#spk)"/>
<rect x="764.96" y="415" width="5.6" height="12" rx="1" fill="url(#spk)"/>
<rect x="772.32" y="415" width="5.6" height="12" rx="1" fill="url(#spk)"/>
<rect x="779.68" y="415" width="5.6" height="12" rx="1" fill="url(#spk)"/>
<rect x="787.04" y="415" width="5.6" height="12" rx="1" fill="url(#spk)"/>
<rect x="794.40" y="415" width="5.6" height="12" rx="1" fill="url(#spk)"/>
<rect x="801.76" y="415" width="5.6" height="12" rx="1" fill="url(#spk)"/>
<rect x="809.12" y="415" width="5.6" height="12" rx="1" fill="url(#spk)"/>
<rect x="816.48" y="415" width="5.6" height="12" rx="1" fill="url(#spk)"/>
<rect x="823.84" y="415" width="5.6" height="12" rx="1" fill="url(#spk)"/>
<rect x="831.20" y="415" width="5.6" height="12" rx="1" fill="url(#spk)"/>
<rect x="838.56" y="415" width="5.6" height="12" rx="1" fill="url(#spk)"/>
<rect x="845.92" y="415" width="5.6" height="12" rx="1" fill="url(#spk)"/>
<rect x="853.28" y="415" width="5.6" height="12" rx="1" fill="url(#spk)"/>
<rect x="860.64" y="415" width="5.6" height="12" rx="1" fill="url(#spk)"/>
<rect x="868.00" y="415" width="5.6" height="12" rx="1" fill="url(#spk)"/>
<rect x="875.36" y="415" width="5.6" height="12" rx="1" fill="url(#spk)"/>
<rect x="882.72" y="415" width="5.6" height="12" rx="1" fill="url(#spk)"/>
<rect x="890.08" y="415" width="5.6" height="12" rx="1" fill="url(#spk)"/>
<rect x="897.44" y="415" width="5.6" height="12" rx="1" fill="url(#spk)"/>
<rect x="904.80" y="415" width="5.6" height="12" rx="1" fill="url(#spk)"/>
<rect x="912.16" y="415" width="5.6" height="12" rx="1" fill="url(#spk)"/>
<rect x="919.52" y="415" width="5.6" height="12" rx="1" fill="url(#spk)"/>
<rect x="926.88" y="415" width="5.6" height="12" rx="1" fill="url(#spk)"/>
<rect x="934.24" y="415" width="5.6" height="12" rx="1" fill="url(#spk)"/>
<rect x="941.60" y="415" width="5.6" height="12" rx="1" fill="url(#spk)"/>
<rect x="948.96" y="415" width="5.6" height="12" rx="1" fill="url(#spk)"/>
<rect x="956.32" y="415" width="5.6" height="12" rx="1" fill="url(#spk)"/>
<rect x="963.68" y="415" width="5.6" height="12" rx="1" fill="url(#spk)"/>
<rect x="971.04" y="415" width="5.6" height="12" rx="1" fill="url(#spk)"/>
<rect x="978.40" y="415" width="5.6" height="12" rx="1" fill="url(#spk)"/>
<rect x="985.76" y="415" width="5.6" height="12" rx="1" fill="url(#spk)"/>
<rect x="993.12" y="415" width="5.6" height="12" rx="1" fill="url(#spk)"/>
<rect x="1000.48" y="415" width="5.6" height="12" rx="1" fill="url(#spk)"/>
<rect x="1007.84" y="415" width="5.6" height="12" rx="1" fill="url(#spk)"/>
<rect x="1015.20" y="415" width="5.6" height="12" rx="1" fill="url(#spk)"/>
<rect x="1022.56" y="415" width="5.6" height="12" rx="1" fill="url(#spk)"/>
<rect x="1029.92" y="415" width="5.6" height="12" rx="1" fill="url(#spk)"/>
<rect x="1037.28" y="415" width="5.6" height="12" rx="1" fill="url(#spk)"/>
<rect x="1044.64" y="415" width="5.6" height="12" rx="1" fill="url(#spk)"/>
<rect x="625.3" y="427" width="29.7" height="18.6" fill="#dce6f2"/>
<rect x="625.3" y="445.6" width="18" height="5" fill="#505458"/>
<rect x="625.3" y="450.6" width="18" height="61" fill="#c4c6ca"/>
<rect x="643.2" y="445.6" width="12" height="66" fill="#e4ecf6"/>
<path d="M628,511.5 L641,504 L643,505 L632,511.5 Z" fill="#e8eef6"/>
<rect x="727.6" y="427" width="29.8" height="18.6" fill="#dce6f2"/>
<rect x="740" y="445.6" width="17.4" height="5" fill="#505458"/>
<rect x="740" y="450.6" width="17.4" height="61" fill="#c4c6ca"/>
<rect x="728" y="445.6" width="12.5" height="66" fill="#e4ecf6"/>
<path d="M754,511.5 L741,504 L740,505 L750,511.5 Z" fill="#e8eef6"/>
<rect x="655" y="415" width="13" height="12" fill="#b2b8c8" opacity="0.5"/>
<rect x="655" y="427" width="8.5" height="85" fill="#b8c0ce"/>
<rect x="663.3" y="427" width="5" height="85" fill="#dadde6"/>
<rect x="655" y="445" width="13" height="1.2" fill="#3a3e48"/>
<rect x="654.8" y="427" width="1.9" height="85" fill="#101418"/>
<rect x="715" y="415" width="13" height="12" fill="#b2b8c8" opacity="0.5"/>
<rect x="720" y="427" width="8" height="85" fill="#b8c0ce"/>
<rect x="715" y="427" width="5" height="85" fill="#dadde6"/>
<rect x="715" y="445" width="13" height="1.2" fill="#3a3e48"/>
<rect x="719.8" y="427" width="1.9" height="85" fill="#101418"/>
<rect x="675" y="416" width="33" height="96" fill="#f6f6f8"/>
<rect x="675" y="409" width="6" height="8" fill="#f4f4f6"/>
<rect x="702.5" y="409" width="5.5" height="8" fill="#f4f4f6"/>
<rect x="676" y="420.5" width="5" height="1.2" fill="#707070"/>
<rect x="702.5" y="420.5" width="5" height="1.2" fill="#707070"/>
<rect x="668" y="409" width="7" height="103" fill="#060606"/>
<rect x="708" y="409" width="7" height="103" fill="#060606"/>
<rect x="681" y="489" width="22" height="18" fill="#ededf0"/>
<rect x="686" y="489" width="12" height="18" fill="#f4f4f6"/>
<rect x="677.5" y="486" width="3" height="26" fill="#8e8e90"/>
<rect x="678.5" y="487" width="1.2" height="24" fill="#c8c8ca"/>
<rect x="703.5" y="486" width="3" height="26" fill="#8e8e90"/>
<rect x="704.5" y="487" width="1.2" height="24" fill="#c8c8ca"/>
<rect x="687" y="487" width="10" height="2" fill="#7a7a7c"/>
<path d="M680,506 L704,506 L707,514 L677,514 Z" fill="#e2e2e4"/>
<path d="M340.5,604.5 L346.5,604.5 L340.5,611 L346.5,611" fill="none" stroke="#5a6ab0" stroke-width="1.1"/>
<path d="M340.5,612 L343.5,615 L346.5,612 M343.5,615 L343.5,618" fill="none" stroke="#9ab040" stroke-width="1.1"/>
<path d="M342,613 L342,625 L350,625" fill="none" stroke="#c04040" stroke-width="1"/>
<path d="M348.5,630 L356,638 M356,630 L348.5,638" fill="none" stroke="#c83030" stroke-width="1.3"/>
</svg>

<!-- tabs -->
<div class="a" style="left:313px;top:659px;width:120px;height:27px;border:1px solid #9a9a9a;border-bottom:none;background:#fafbfd"></div>
<div class="a" style="left:433px;top:660px;width:120px;height:25px;border:1px solid #9a9a9a;background:linear-gradient(#f0f0f0,#d8d8d8)"></div>
<div class="a" style="left:553px;top:660px;width:106px;height:25px;border:1px solid #9a9a9a;border-left:none;background:linear-gradient(#f0f0f0,#d8d8d8)"></div>
<div class="t" style="left:320px;top:668px;font-size:10px;color:#222">Composizione pressore</div>
<div class="t" style="left:437px;top:668px;font-size:10px;color:#222">Configurazione pressore</div>
<div class="t" style="left:558px;top:668px;font-size:10px;color:#222">Informazioni utensile</div>
<div class="a" style="left:313px;top:685px;width:759px;height:142px;border:1px solid #9a9a9a;background:#fafbfd"></div>


<div class="t" style="left:359px;top:692.5px;width:100px;text-align:center;font-size:9.8px;font-weight:bold;color:#111">Lato sinistro</div>
<div class="t" style="left:717px;top:693px;width:100px;text-align:center;font-size:10px;font-weight:bold;color:#111">Lato destro</div>
<div class="t" style="left:911px;top:693px;width:100px;text-align:center;font-size:10.2px;font-weight:bold;color:#111">Opzioni</div>
<div class="mn" style="left:368px;top:716px"></div><div class="inp" style="left:392px;top:709px">5</div><div class="pl" style="left:428px;top:709px"></div>
<div class="mn" style="left:368px;top:746px"></div><div class="inp" style="left:392px;top:740px">0</div><div class="pl" style="left:428px;top:740px"></div>
<div class="mn" style="left:368px;top:777px"></div><div class="inp" style="left:392px;top:771px">1</div><div class="pl" style="left:428px;top:771px"></div>
<div class="mn" style="left:727px;top:716px"></div><div class="inp" style="left:751px;top:709px">5</div><div class="pl" style="left:787px;top:709px"></div>
<div class="mn" style="left:727px;top:746px"></div><div class="inp" style="left:751px;top:740px">0</div><div class="pl" style="left:787px;top:740px"></div>
<div class="mn" style="left:727px;top:777px"></div><div class="inp" style="left:751px;top:771px">1</div><div class="pl" style="left:787px;top:771px"></div>
<div class="lbl" style="left:487px;top:715px">Numero utensili mobili</div>
<div class="lbl" style="left:487px;top:746px">Posizione CLL</div>
<div class="lbl" style="left:487px;top:777px">Posizione utensile finale</div>
<div class="lbl" style="left:487px;top:806.5px">Utensile finale in ATC</div>
<div class="cb" style="left:398px;top:805px"></div>
<div class="cb" style="left:757px;top:805px"></div>
<div class="t" style="left:906px;top:715px;font-size:9.2px;color:#222">Salta il ripristino ATC</div>
<div class="cb" style="left:998px;top:713px"></div>


<!-- toolbar icons -->
<svg class="a" style="left:105px;top:130px" width="190" height="26" viewBox="105 130 190 26">
  <defs>
    <linearGradient id="docg" x1="0" y1="0" x2="0" y2="1"><stop offset="0" stop-color="#f4f8fc"/><stop offset="1" stop-color="#d4e2f2"/></linearGradient>
    <linearGradient id="arrg" x1="0" y1="0" x2="0" y2="1"><stop offset="0" stop-color="#8ab4ea"/><stop offset="1" stop-color="#3a6ec0"/></linearGradient>
  </defs>
  <!-- icon1 -->
  <path d="M110,136 L118,136 L122,140 L122,153 L110,153 Z" fill="url(#docg)" stroke="#9ab6dc" stroke-width="0.8"/>
  <path d="M114,146 L114,136 Q116,132.5 118,136 L118,144" fill="none" stroke="#5a8ad0" stroke-width="1.6"/>
  <path d="M119,146.5 L124,140 L129,146.5 Z" fill="#7aa8e4" stroke="#4a78c0" stroke-width="0.6"/>
  <path d="M119,153 L124,147.5 L129,153 Z" fill="#3a70c4" stroke="#2a5aa8" stroke-width="0.6"/>
  <!-- icon2 -->
  <path d="M161,136 L169,136 L173,140 L173,153 L161,153 Z" fill="url(#docg)" stroke="#9ab6dc" stroke-width="0.8"/>
  <path d="M165,146 L165,136 Q167,132.5 169,136 L169,144" fill="none" stroke="#5a8ad0" stroke-width="1.6"/>
  <path d="M170,147 L175.5,140.5 L181,147 L178,147 L178,153 L173,153 L173,147 Z" fill="url(#arrg)" stroke="#3a68b8" stroke-width="0.6"/>
  <!-- icon3 -->
  <path d="M212,135 L221,135 L227,141 L227,153 L212,153 Z" fill="url(#docg)" stroke="#9ab6dc" stroke-width="0.8"/>
  <path d="M216,146 L216,135.5 Q218,132 220,135.5 L220,144" fill="none" stroke="#5a8ad0" stroke-width="1.6"/>
  <path d="M224,145 L228,149 M232,145 L228,149 M228,149 L224,153 M228,149 L232,153" stroke="#d83a20" stroke-width="3" stroke-linecap="round"/>
  <!-- icon4 -->
  <rect x="264.5" y="133.5" width="11" height="10.5" rx="2" fill="#8a9080" stroke="#6a7060" stroke-width="0.8"/>
  <path d="M266,137 L274,137 M266,140.5 L274,140.5 M269,134.5 L269,143 M272,134.5 L272,143" stroke="#c8ccc0" stroke-width="0.8"/>
  <path d="M266.5,153.5 L268,148 L279,137.5 L283,141.5 L272,152 Z" fill="#e8b838" stroke="#a87818" stroke-width="0.8"/>
  <circle cx="281" cy="138.5" r="4" fill="#d84858" stroke="#e87888" stroke-width="0.8"/>
</svg>

<!-- main button icons -->
<svg class="a" style="left:313px;top:194px" width="760" height="26" viewBox="313 194 760 26">
  <defs>
    <linearGradient id="bl" x1="0" y1="0" x2="1" y2="1"><stop offset="0" stop-color="#7aa8e8"/><stop offset="1" stop-color="#2a5ab0"/></linearGradient>
  </defs>
  <!-- pressore -->
  <g fill="#7a8cb2">
    <rect x="345" y="203.5" width="22" height="3"/>
    <rect x="345" y="214.5" width="22" height="2.5"/>
    <rect x="350" y="199" width="4" height="18"/>
    <rect x="357.5" y="199" width="4" height="18"/>
  </g>
  <rect x="351" y="199" width="1.2" height="18" fill="#9aaccc"/>
  <rect x="358.5" y="199" width="1.2" height="18" fill="#9aaccc"/>
  <rect x="354" y="200" width="3.5" height="17" fill="#b8c8e4"/>
  <!-- ASP -->
  <path d="M441,210 L448,200.5 L452,203 L446,212 L446,218 Z" fill="#3a68b8"/>
  <path d="M446,212 L452,203 L459,207 L453,215 L446,218 Z" fill="#5a90dc"/>
  <path d="M446,212 L452,203" fill="none" stroke="#a8c8f0" stroke-width="0.8"/>
  <!-- AUT -->
  <path d="M532,206 L544,200 L553,204 L549,207 L553,210 L541,217 L533,211 Z" fill="url(#bl)"/>
  <path d="M533,206 L541,211 L553,205" fill="none" stroke="#9ac0f0" stroke-width="0.9"/>
  <!-- centratori -->
  <path d="M631,203 Q633,199 637,200.5 L638,207 Q644,208 643,214 Q641,218.5 635,217.5 Q631,215 631,210 Z" fill="url(#bl)"/>
  <!-- manipolatore -->
  <path d="M724,200 L727,199.5 L729,205 L733,208 L736,214 L732,216 L727,212 L724,206 Z" fill="url(#bl)"/>
  <path d="M731,214 L735,219" stroke="#1a2a50" stroke-width="1.8"/>
  <!-- opzionale -->
  <path d="M821,198.5 L832.8,200.5 L832.8,208 L821,206.5 Z" fill="#3a62a6"/>
  <path d="M822.5,200.5 L831.5,202 M822.5,203 L831.5,204.5" stroke="#5a88c8" stroke-width="0.8"/>
  <path d="M813.5,209 L821,206 L832.8,208.5 L826,212 Z" fill="#7aaadc"/>
  <path d="M813.5,209 L826,212 L826,218 L813.5,214 Z" fill="#3a68b0"/>
  <path d="M826,212 L832.8,208.5 L832.8,214 L826,218 Z" fill="#234886"/>
  <!-- confronta -->
  <path d="M1018,200 L1028,196.5 L1033,199 L1033,212 L1023,215 L1018,213 Z" fill="url(#bl)"/>
  <path d="M1036,214 L1041,219" stroke="#4a5058" stroke-width="2.5" stroke-linecap="round"/>
  <circle cx="1031.5" cy="208.5" r="6" fill="#dce8f6" stroke="#9ab4d8" stroke-width="1.3"/>
</svg>
<!-- zoom icons -->
<svg class="a" style="left:970px;top:244px" width="102" height="25" viewBox="970 244 102 25">
  <g>
    <path d="M986,260 L990,264" stroke="#8a94a4" stroke-width="2.2" stroke-linecap="round"/>
    <circle cx="982" cy="255.5" r="5.5" fill="#e4eef8" stroke="#a8c2e4" stroke-width="1.6"/>
    <path d="M979.5,255.5 L984.5,255.5 M982,253 L982,258" stroke="#90a8d0" stroke-width="1"/>
    <path d="M1020,260 L1024,264" stroke="#8a94a4" stroke-width="2.2" stroke-linecap="round"/>
    <circle cx="1016" cy="255.5" r="5.5" fill="#e4eef8" stroke="#a8c2e4" stroke-width="1.6"/>
    <rect x="1013" y="254.5" width="6" height="2.2" fill="#fff" stroke="#90a8d0" stroke-width="0.7"/>
    <rect x="1045" y="247.5" width="19" height="17" fill="none" stroke="#333" stroke-width="1" stroke-dasharray="2,1.5"/>
    <path d="M1057,260 L1061,264" stroke="#8a94a4" stroke-width="2.2" stroke-linecap="round"/>
    <circle cx="1053" cy="255.5" r="5.5" fill="#e4eef8" stroke="#a8c2e4" stroke-width="1.6"/>
    <rect x="1050" y="254.5" width="6" height="2.2" fill="#fff" stroke="#90a8d0" stroke-width="0.7"/>
  </g>
</svg>

<!-- sidebar icons -->
<svg class="a" style="left:8px;top:188px" width="81" height="330" viewBox="8 188 81 330">
  <defs>
    <linearGradient id="coin" x1="0" y1="0" x2="1" y2="0"><stop offset="0" stop-color="#a87a18"/><stop offset="0.45" stop-color="#f4dc70"/><stop offset="1" stop-color="#9a7010"/></linearGradient>
    <linearGradient id="rad" x1="0" y1="0" x2="1" y2="0"><stop offset="0" stop-color="#b0b0b0"/><stop offset="0.4" stop-color="#f8f8f8"/><stop offset="1" stop-color="#a0a0a0"/></linearGradient>
    <linearGradient id="flr" x1="0" y1="0" x2="1" y2="0"><stop offset="0" stop-color="#8a9098"/><stop offset="1" stop-color="#c8ccd0"/></linearGradient>
    <filter id="sh" x="-20%" y="-20%" width="140%" height="140%"><feGaussianBlur stdDeviation="1.2"/></filter>
  </defs>
  <!-- tray + coins -->
  <path d="M26,229 L55.5,209 L57.5,213.5 L28,234 Z" fill="#3c3e42"/><path d="M26,229 L55.5,209 L56,210 L26.5,230 Z" fill="#e8e8e8"/>
  <path d="M29,234 L58,214 L73,219 L44,240 Z" fill="url(#flr)"/>
  <path d="M58,214 L68,212 L76,216 L74,224 L62,222 Z" fill="#3a70c8"/>
  <path d="M23,236 L30,235 L44,240 L73,220 L76,218 L75,226 L46,249 L26,246 Z" fill="#3a6cc4"/>
  <path d="M24,240 L44,244 L74,222" fill="none" stroke="#8ab0ec" stroke-width="1"/>
  <g>
    <ellipse cx="57.5" cy="249" rx="9.5" ry="3.5" fill="#9a7010"/>
    <rect x="48" y="233" width="19" height="16" fill="url(#coin)"/>
    <path d="M48,238 Q57.5,242 67,238 M48,243 Q57.5,247 67,243" fill="none" stroke="#a07818" stroke-width="0.8"/>
    <ellipse cx="57.5" cy="233" rx="9.5" ry="3.5" fill="#f4dc78" stroke="#b88a20" stroke-width="0.6"/>
  </g>
  <!-- radiator + gear -->
  <path d="M27,300 L60,296 L61,328 L30,333 Z" fill="url(#rad)" stroke="#8a8a8a" stroke-width="0.6"/>
  <path d="M33,300 L34,331 M38,299 L39,331 M43,298.5 L44,330 M48,298 L49,329.5 M53,297.5 L54,329 M58,297 L58.5,328" stroke="#9a9a9a" stroke-width="0.9"/>
  <path d="M27,300 L61,295 L69,291 L35,296 Z" fill="#d8d8d8" stroke="#8a8a8a" stroke-width="0.6"/>
  <path d="M36,296 L38,288 M41,295 L43,288 M46,294.5 L48,288 M51,294 L53,288 M56,293 L58,288 M61,292.5 L63,288 M66,291.5 L68,288" stroke="#8a8a8a" stroke-width="1.3"/>
  <g transform="translate(58,330.5) scale(1.4,1)">
    <circle cx="0" cy="0" r="8.5" fill="none" stroke="#3a6ac8" stroke-width="4" stroke-dasharray="3.4,2.9"/>
    <circle cx="0" cy="0" r="5.5" fill="#4a7ad4" stroke="#3a6ac8" stroke-width="3"/>
    <circle cx="0" cy="-1" r="2.6" fill="#2a4a8a"/>
  </g>
  <!-- radiator + coins -->
  <path d="M27,380 L60,376 L61,408 L30,413 Z" fill="url(#rad)" stroke="#8a8a8a" stroke-width="0.6"/>
  <path d="M33,380 L34,411 M38,379 L39,411 M43,378.5 L44,410 M48,378 L49,409.5 M53,377.5 L54,409 M58,377 L58.5,408" stroke="#9a9a9a" stroke-width="0.9"/>
  <path d="M27,380 L61,375 L69,371 L35,376 Z" fill="#d8d8d8" stroke="#8a8a8a" stroke-width="0.6"/>
  <path d="M36,376 L38,368 M41,375 L43,368 M46,374.5 L48,368 M51,374 L53,368 M56,373 L58,368 M61,372.5 L63,368 M66,371.5 L68,368" stroke="#8a8a8a" stroke-width="1.3"/>
  <g>
    <ellipse cx="60.5" cy="417.5" rx="9.5" ry="3.5" fill="#9a7010"/>
    <rect x="51" y="402" width="19" height="15.5" fill="url(#coin)"/>
    <path d="M51,407 Q60.5,411 70,407 M51,412 Q60.5,416 70,412" fill="none" stroke="#a07818" stroke-width="0.8"/>
    <ellipse cx="60.5" cy="402" rx="9.5" ry="3.5" fill="#f4dc78" stroke="#b88a20" stroke-width="0.6"/>
  </g>
  <!-- monitor + magnifier -->
  <path d="M35,493 L62,490 L66,500 L38,504 Z" fill="#a8acb4"/>
  <path d="M31,463 L62,462 L63,494 L32,495 Z" fill="#16204a"/>
  <path d="M34,466 L60,465 L60.5,491 L34.5,492 Z" fill="#3a5a9a"/>
  <circle cx="44" cy="477" r="9.5" fill="#7a9a68" stroke="#d8e0e8" stroke-width="2"/>
  <circle cx="49" cy="474" r="2.5" fill="#e8e060"/>
  <path d="M51,485 L63,497" stroke="#f0f0f0" stroke-width="3.2" stroke-linecap="round"/>
</svg>

<!-- status bar -->
<div class="a" style="left:8px;top:838px;width:1072px;height:22px;border-radius:6px;background:#fff"></div>
<div class="t" style="left:473px;top:845px;font-size:11.8px;color:#b8423c">Test alarm number 601509</div>
</body></html>
